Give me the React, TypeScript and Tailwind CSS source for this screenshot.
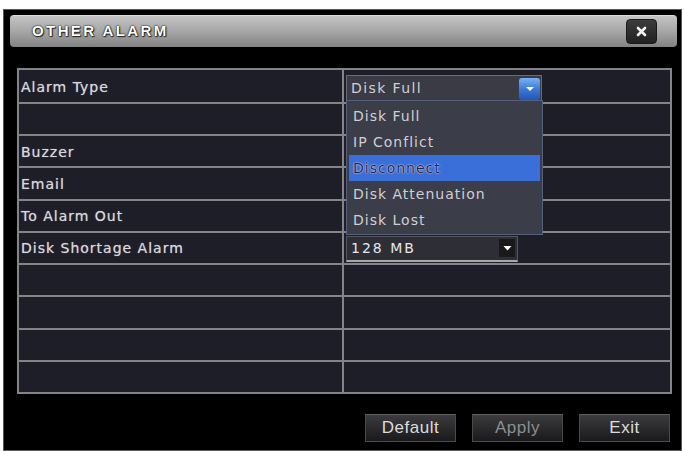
import React from "react";

const labelFont = "font-['DejaVu_Sans',sans-serif]";

function Row({ label, children, first }: { label?: string; children?: React.ReactNode; first?: boolean }) {
  return (
    <div className={`flex flex-1 ${first ? "" : "border-t-2 border-[#838388]"}`}>
      <div className={`w-[325px] border-r-2 border-[#838388] flex items-center pl-[2px] pt-[2px] text-[14px] tracking-[1px] text-[#d8d8dc] [text-shadow:0_0_1px_#9a9aa0] ${labelFont}`}>
        {label}
      </div>
      <div className="flex-1 flex items-center pl-[2px]">{children}</div>
    </div>
  );
}

function Btn({ text, dim }: { text: string; dim?: boolean }) {
  return (
    <div
      className={`w-[91px] h-[28px] flex items-center justify-center border border-[#4a4a4a] border-t-[#5e5e5e] bg-gradient-to-b from-[#3c3c3e] to-[#1a1a1c] font-['Liberation_Sans',sans-serif] text-[17px] tracking-[0.5px] ${
        dim ? "text-[#8e8e90]" : "text-[#dcdcdc]"
      }`}
    >
      {text}
    </div>
  );
}

export default function App() {
  const items = ["Disk Full", "IP Conflict", "Disconnect", "Disk Attenuation", "Disk Lost"];
  return (
    <div className="w-[684px] h-[451px] bg-white pt-[9px] pl-[3px] overflow-hidden">
      <div className="w-[679px] h-[442px] bg-black border border-[#5a5a5a] flex flex-col">
        {/* title bar */}
        <div className="mt-[5px] ml-[6px] w-[667px] h-[32px] rounded-[4px] border-t border-[#d8d8d8] bg-gradient-to-b from-[#c4c4c4] via-[#a6a6a6] to-[#828282] flex items-center justify-between pl-[22px] pr-[20px]">
          <span className="font-['Liberation_Sans',sans-serif] font-bold text-[15px] tracking-[2.4px] text-white [text-shadow:0_0_1px_#000,0_0_2px_#111,1px_1px_1px_#333]">
            OTHER ALARM
          </span>
          <div className="w-[31px] h-[25px] rounded-[4px] bg-gradient-to-b from-[#3c3c3c] to-[#222] border border-[#1a1a1a] flex items-center justify-center">
            <svg width="11" height="11" viewBox="0 0 11 11">
              <path d="M2 2 L9 9 M9 2 L2 9" stroke="#f2f2f2" strokeWidth="2.6" strokeLinecap="round" />
            </svg>
          </div>
        </div>

        {/* table */}
        <div className="relative mt-[21px] ml-[13px] w-[655px] h-[326px] border-2 border-[#838388] bg-[#1e1e28] flex flex-col">
          <Row label="Alarm Type" first>
            <div className="mt-[5px] w-[196px] h-[27px] bg-[#3a3b44] border border-[#6a6a70] border-b-[#8a96b8] flex items-center justify-between pl-[4px] pr-[1px]">
              <span className={`text-[14px] tracking-[1.4px] text-[#cfcfd4] ${labelFont}`}>Disk Full</span>
              <div className="w-[21px] h-[22px] rounded-[3px] bg-gradient-to-b from-[#7ab4f4] via-[#3d7ad8] to-[#2454b8] flex items-center justify-center">
                <svg width="10" height="6" viewBox="0 0 10 6">
                  <path d="M1 1 H9 L5 5 Z" fill="#fff" />
                </svg>
              </div>
            </div>
          </Row>
          <Row />
          <Row label="Buzzer" />
          <Row label="Email" />
          <Row label="To Alarm Out" />
          <Row label="Disk Shortage Alarm">
            <div className="mt-[2px] w-[172px] h-[26px] bg-[#2e2f36] border border-[#55555a] border-b-2 border-b-[#a8a8ac] flex items-center justify-between pl-[4px] pr-[2px]">
              <span className={`text-[14px] tracking-[2px] text-[#e6e6ea] ${labelFont}`}>128 MB</span>
              <div className="w-[16px] h-[18px] bg-[#19191c] flex items-center justify-center">
                <svg width="9" height="6" viewBox="0 0 9 6">
                  <path d="M0.5 1 H8.5 L4.5 5.5 Z" fill="#fff" />
                </svg>
              </div>
            </div>
          </Row>
          <Row />
          <Row />
          <Row />
          <Row />

          {/* dropdown list overlay */}
          <div className="absolute left-[327px] top-[30px] w-[197px] h-[135px] bg-[#3b3d48] border border-[#56607c] pt-[2px] px-[2px] flex flex-col">
            {items.map((it, i) => (
              <div
                key={it}
                className={`h-[26px] flex items-center pl-[4px] text-[14px] tracking-[1px] ${labelFont} ${
                  i === 2
                    ? "bg-[#3a6ed8] text-[#262248] [text-shadow:0_0_1px_#f0f0f8,0_0_2px_#d0d0e8]"
                    : "text-[#cfcfd4]"
                }`}
              >
                {it}
              </div>
            ))}
          </div>
        </div>

        {/* buttons */}
        <div className="mt-[20px] flex justify-end gap-[16px] pr-[11px]">
          <Btn text="Default" />
          <Btn text="Apply" dim />
          <Btn text="Exit" />
        </div>
      </div>
    </div>
  );
}
